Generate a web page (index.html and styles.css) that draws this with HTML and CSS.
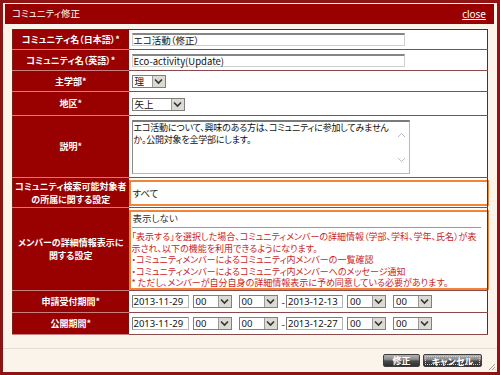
FILE: index.html
```html
<!DOCTYPE html>
<html lang="ja">
<head>
<meta charset="utf-8">
<title>コミュニティ修正</title>
<link rel="stylesheet" href="styles.css">
</head>
<body>
<div class="dialog">
  <div class="titlebar">
    <span class="title">コミュニティ修正</span>
    <a class="close" href="#">close</a>
  </div>
  <div class="content">
    <table class="form">
      <colgroup><col class="c-label"><col class="c-value"></colgroup>
      <tr class="h20">
        <th>コミュニティ名（日本語）*</th>
        <td><span class="text wide">エコ活動（修正）</span></td>
      </tr>
      <tr class="h21">
        <th>コミュニティ名（英語）*</th>
        <td><span class="text wide">Eco-activity(Update)</span></td>
      </tr>
      <tr class="h21">
        <th>主学部*</th>
        <td><span class="sel sel-s"><span class="val">理</span><span class="arr"><svg width="9" height="7" viewBox="0 0 9 7"><path d="M1 1.5 L4.5 5 L8 1.5" fill="none" stroke="#333" stroke-width="1.6"/></svg></span></span></td>
      </tr>
      <tr class="h24">
        <th>地区*</th>
        <td><span class="sel sel-m"><span class="val">矢上</span><span class="arr"><svg width="9" height="7" viewBox="0 0 9 7"><path d="M1 1.5 L4.5 5 L8 1.5" fill="none" stroke="#333" stroke-width="1.6"/></svg></span></span></td>
      </tr>
      <tr class="h62">
        <th>説明*</th>
        <td>
          <div class="area">
            <div class="area-text">エコ活動について、興味のある方は、コミュニティに参加してみません<br>か。公開対象を全学部にします。</div>
            <div class="scroll">
              <svg width="9" height="6" viewBox="0 0 9 6"><path d="M1 5 L4.5 1.5 L8 5" fill="none" stroke="#bbb" stroke-width="1"/></svg>
              <svg width="9" height="6" viewBox="0 0 9 6"><path d="M1 1 L4.5 4.5 L8 1" fill="none" stroke="#bbb" stroke-width="1"/></svg>
            </div>
          </div>
        </td>
      </tr>
      <tr class="h30">
        <th>コミュニティ検索可能対象者<br>の所属に関する設定</th>
        <td class="hl-cell"><div class="hl hl-1">すべて</div></td>
      </tr>
      <tr class="h83">
        <th>メンバーの詳細情報表示に<br>関する設定</th>
        <td class="hl-cell"><div class="hl hl-2">
          <div class="choice">表示しない</div>
          <div class="note">「表示する」を選択した場合、コミュニティメンバーの詳細情報（学部、学科、学年、氏名）が表<br>示され、以下の機能を利用できるようになります。<br>・コミュニティメンバーによるコミュニティ内メンバーの一覧確認<br>・コミュニティメンバーによるコミュニティ内メンバーへのメッセージ通知<br>* ただし、メンバーが自分自身の詳細情報表示に予め同意している必要があります。</div>
        </div></td>
      </tr>
      <tr class="h22">
        <th>申請受付期間*</th>
        <td>
          <div class="period">
            <span class="date">2013-11-29</span>
            <span class="sel sel-t g4"><span class="val">00</span><span class="arr"><svg width="9" height="7" viewBox="0 0 9 7"><path d="M1 1.5 L4.5 5 L8 1.5" fill="none" stroke="#333" stroke-width="1.6"/></svg></span></span>
            <span class="sel sel-t g7"><span class="val">00</span><span class="arr"><svg width="9" height="7" viewBox="0 0 9 7"><path d="M1 1.5 L4.5 5 L8 1.5" fill="none" stroke="#333" stroke-width="1.6"/></svg></span></span>
            <span class="dash">-</span>
            <span class="date">2013-12-13</span>
            <span class="sel sel-t g4"><span class="val">00</span><span class="arr"><svg width="9" height="7" viewBox="0 0 9 7"><path d="M1 1.5 L4.5 5 L8 1.5" fill="none" stroke="#333" stroke-width="1.6"/></svg></span></span>
            <span class="sel sel-t g7"><span class="val">00</span><span class="arr"><svg width="9" height="7" viewBox="0 0 9 7"><path d="M1 1.5 L4.5 5 L8 1.5" fill="none" stroke="#333" stroke-width="1.6"/></svg></span></span>
          </div>
        </td>
      </tr>
      <tr class="h22">
        <th>公開期間*</th>
        <td>
          <div class="period">
            <span class="date">2013-11-29</span>
            <span class="sel sel-t g4"><span class="val">00</span><span class="arr"><svg width="9" height="7" viewBox="0 0 9 7"><path d="M1 1.5 L4.5 5 L8 1.5" fill="none" stroke="#333" stroke-width="1.6"/></svg></span></span>
            <span class="sel sel-t g7"><span class="val">00</span><span class="arr"><svg width="9" height="7" viewBox="0 0 9 7"><path d="M1 1.5 L4.5 5 L8 1.5" fill="none" stroke="#333" stroke-width="1.6"/></svg></span></span>
            <span class="dash">-</span>
            <span class="date">2013-12-27</span>
            <span class="sel sel-t g4"><span class="val">00</span><span class="arr"><svg width="9" height="7" viewBox="0 0 9 7"><path d="M1 1.5 L4.5 5 L8 1.5" fill="none" stroke="#333" stroke-width="1.6"/></svg></span></span>
            <span class="sel sel-t g7"><span class="val">00</span><span class="arr"><svg width="9" height="7" viewBox="0 0 9 7"><path d="M1 1.5 L4.5 5 L8 1.5" fill="none" stroke="#333" stroke-width="1.6"/></svg></span></span>
          </div>
        </td>
      </tr>
    </table>
  </div>
  <div class="footer">
    <button class="btn btn-save">修正</button>
    <button class="btn btn-cancel"><span class="focus">キャンセル</span></button>
  </div>
  <span class="grip"><svg width="8" height="8" viewBox="0 0 8 8"><path d="M7 1 L1 7 M7 4 L4 7 M7 6.5 L6.5 7" stroke="#9a9a9a" stroke-width="1"/></svg></span>
</div>
</body>
</html>
```

FILE: styles.css
```css
* { box-sizing: border-box; }
html, body { margin: 0; padding: 0; }
body {
  font-family: "Noto Sans CJK JP", "Noto Sans", sans-serif;
  font-size: 9px;
  font-feature-settings: "palt";
  color: #222;
  background: #fbf4ea;
}
.dialog {
  position: relative;
  width: 500px;
  height: 375px;
  border: 3px solid #8e1414;
  background: #fbf4ea;
  padding: 1px 3px 0 2px;
  display: flex;
  flex-direction: column;
}
.titlebar {
  flex: none;
  height: 20px;
  background: #990000;
  color: #fff;
  display: flex;
  align-items: center;
  justify-content: space-between;
  padding: 0 8px 0 7px;
}
.title { font-size: 9.5px; line-height: 1; }
.close {
  color: #fff;
  font-family: "Noto Sans", sans-serif;
  font-size: 10px;
  text-decoration: underline;
}
.content { flex: none; padding: 5px 0 0 7px; }
.form {
  width: 476px;
  table-layout: fixed;
  border-collapse: collapse;
  border: 1px solid #6e2222;
  background: #fff;
}
.c-label { width: 116px; }
.form th {
  background: #990000;
  color: #fff;
  font-weight: bold;
  font-size: 9px;
  line-height: 13px;
  text-align: center;
  white-space: nowrap;
  padding: 0;
  border-bottom: 1px solid #c98080;
}
.form td {
  padding: 0 0 0 3px;
  border-bottom: 1px solid #8a4a4a;
  vertical-align: middle;
}
.h20 { height: 20px; }
.h21 { height: 21px; }
.h22 { height: 22px; }
.h24 { height: 24px; }
.h30 { height: 30px; }
.h62 { height: 62px; }
.h83 { height: 83px; }

.text {
  display: block;
  height: 13px;
  border: 1px solid #cfcfcf;
  border-top: 2px solid #858585;
  background: #fff;
  font-size: 9.5px;
  line-height: 10px;
  padding-left: 1px;
  color: #111;
}
.wide { width: 273px; }

.sel {
  display: inline-flex;
  align-items: stretch;
  height: 13px;
  border: 1px solid #7f7f7f;
  background: #fff;
  vertical-align: middle;
}
.sel .val {
  flex: 1;
  font-size: 9.5px;
  line-height: 11px;
  padding-left: 2px;
  color: #111;
}
.sel .arr {
  width: 13px;
  background: #dcdad3;
  border-left: 1px solid #9a9a9a;
  display: flex;
  align-items: center;
  justify-content: center;
}
.sel-s { width: 34px; }
.sel-m { width: 53px; }
.sel-t { width: 39px; }

.area {
  width: 278px;
  height: 54px;
  border: 1px solid #b8b8b8;
  border-top: 2px solid #7a7a7a;
  border-left: 1px solid #8a8a8a;
  display: flex;
  background: #fff;
}
.area-text {
  flex: 1;
  font-size: 9px;
  line-height: 12px;
  letter-spacing: -0.2px;
  padding: 0 0 0 1px;
  white-space: nowrap;
  overflow: hidden;
  color: #111;
}
.scroll {
  width: 14px;
  display: flex;
  flex-direction: column;
  align-items: center;
  justify-content: space-between;
  padding: 10px 0 10px;
}

.hl-cell { padding: 0 !important; }
.hl {
  border: 2px solid #f0853a;
  margin-right: -2px;
}
.hl-1 {
  height: 26px;
  margin-top: 1px;
  padding-left: 2px;
  line-height: 22px;
  font-size: 9.5px;
}
.hl-2 {
  height: 80px;
  margin-top: 2px;
  padding-left: 1px;
}
.choice {
  font-size: 9.5px;
  line-height: 12px;
  color: #333;
  padding: 0 0 3px 1px;
  margin-right: 6px;
  border-bottom: 1px solid #9a9a9a;
}
.note {
  font-size: 9px;
  line-height: 11.5px;
  color: #cc1e1e;
  padding-top: 3px;
  white-space: nowrap;
}

.period {
  display: flex;
  align-items: center;
}
.date {
  width: 57px;
  height: 13px;
  border: 1px solid #b5b5b5;
  border-top-color: #7c7c7c;
  border-left-color: #7c7c7c;
  font-family: "Noto Sans", sans-serif;
  font-size: 9.5px;
  line-height: 11px;
  padding-left: 1px;
  color: #111;
}
.g4 { margin-left: 4px; }
.g7 { margin-left: 7px; }
.dash { margin: 0 1px 0 4px; font-size: 10px; line-height: 11px; }
.period .sel .val { font-family: "Noto Sans", sans-serif; }

.footer {
  flex: none;
  margin: 13px -3px 0 -2px;
  border-top: 1px solid #e6ddcf;
  padding: 5px 15px 0 0;
  display: flex;
  justify-content: flex-end;
  gap: 3px;
}
.btn {
  height: 13px;
  border: 1px solid #3e3e3e;
  border-radius: 2px;
  background: linear-gradient(#b4b4b4 0%, #8a8a8a 40%, #4a4a4a 55%, #2e2e2e 100%);
  color: #fff;
  font-family: "Noto Sans CJK JP", sans-serif;
  font-feature-settings: "palt";
  font-weight: bold;
  font-size: 9px;
  line-height: 11px;
  padding: 0;
  margin: 0;
  display: flex;
  align-items: center;
  justify-content: center;
}
.btn-save { width: 37px; }
.btn-cancel { width: 59px; padding: 1px; }
.btn-cancel .focus {
  display: block;
  width: 100%;
  height: 100%;
  border: 1px dotted #d0d0d0;
  line-height: 9px;
  text-align: center;
}
.grip {
  position: absolute;
  right: 1px;
  bottom: 1px;
  width: 8px;
  height: 8px;
}
.grip svg { display: block; }
```
